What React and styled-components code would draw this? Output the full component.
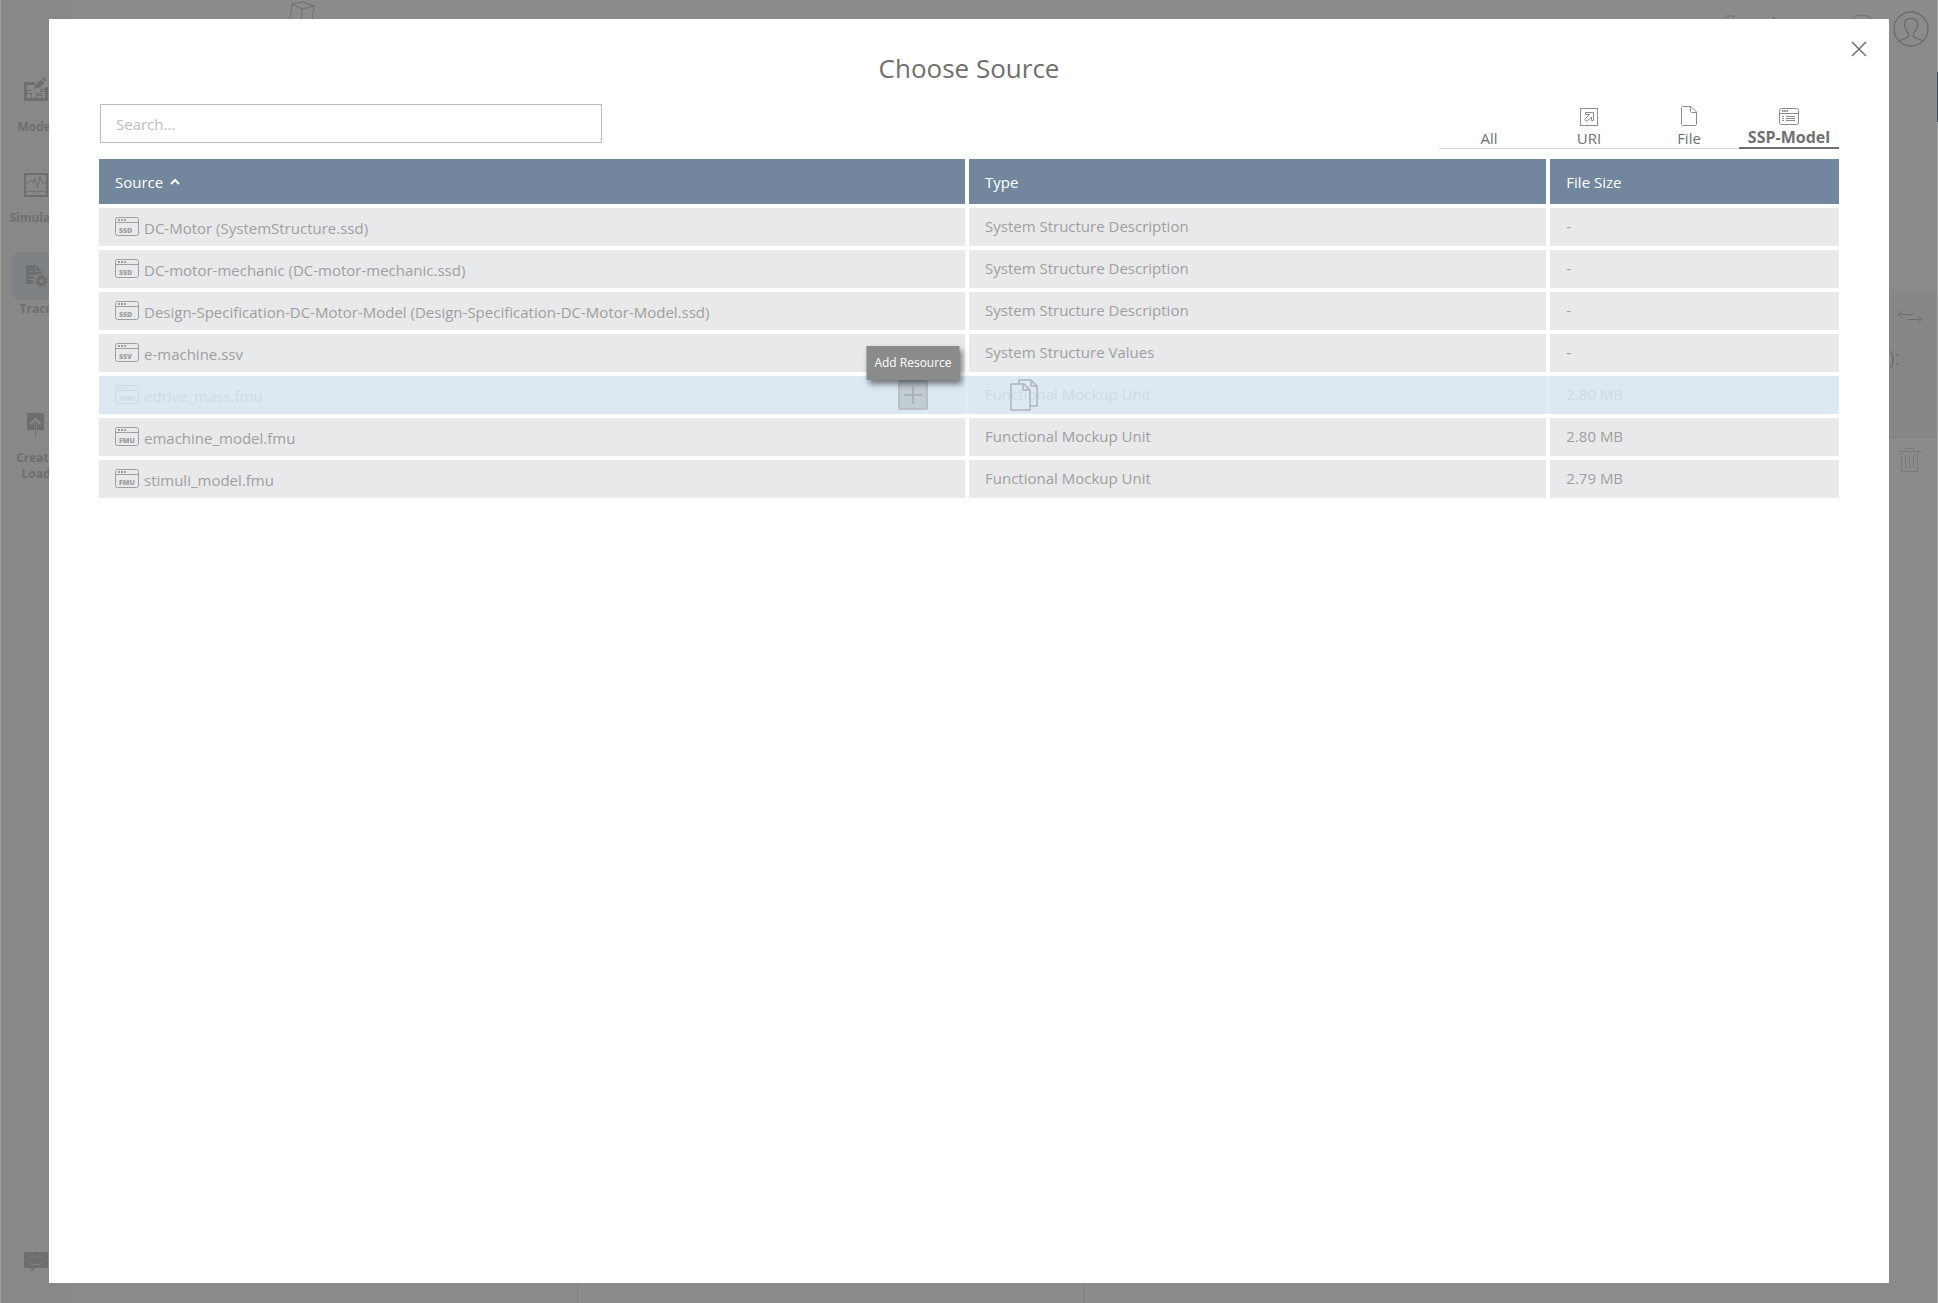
import React, { useState } from 'react';
import styled, { createGlobalStyle } from 'styled-components';

const GlobalStyle = createGlobalStyle`
	* {
		box-sizing: border-box;
	}

	body {
		margin: 0;
		background: #fff;
		color: #706f6f;
		font-family: 'Open Sans', 'Noto Sans', sans-serif;
		font-size: 15px;
		line-height: 20px;
		overflow: hidden;
	}

	button {
		padding: 0;
		border: 0;
		background: none;
		color: inherit;
		font: inherit;
		cursor: pointer;
	}

	svg {
		display: block;
		flex: none;
	}
`;

/* ---------- page behind the dialog ---------- */

const Shell = styled.div`
	display: flex;
	min-height: 100vh;
`;

const Sidebar = styled.nav`
	display: flex;
	flex-direction: column;
	align-items: center;
	gap: 26px;
	width: 72px;
	padding: 70px 0 31px;
	background: #f0f0f0;
`;

const NavItem = styled.a`
	display: flex;
	flex-direction: column;
	align-items: center;
	gap: 1px;
	margin-top: ${props => (props.$spaced ? '58px' : '0')};
	color: #706f6f;
	font-size: 12px;
	font-weight: 700;
	line-height: 16px;
	text-align: center;
	text-decoration: none;
`;

const NavTile = styled.span`
	display: flex;
	align-items: center;
	justify-content: center;
	width: 48px;
	height: 48px;
	border-radius: 8px;
	background: ${props => (props.$active ? '#bcd3dc' : 'transparent')};
`;

const Feedback = styled.button`
	margin-top: auto;
`;

const Main = styled.div`
	display: flex;
	flex: 1;
	flex-direction: column;
`;

const TopBar = styled.header`
	display: flex;
	align-items: center;
	gap: 9px;
	height: 58px;
	padding: 0 9px 0 217px;
`;

const TopActions = styled.div`
	display: grid;
	grid-template-columns: repeat(4, 44px);
	align-items: center;
	justify-items: center;
	margin-left: auto;

	> :last-child {
		grid-column: 4;
	}
`;

const Columns = styled.div`
	display: grid;
	flex: 1;
	grid-template-columns: 506fr 507fr 853fr;
`;

const Column = styled.section`
	padding-top: 232px;
	border-right: 1px solid ${props => (props.$last ? 'transparent' : '#c0c0c0')};
`;

const TraceCard = styled.div`
	display: flex;
	flex-direction: column;
	align-items: flex-end;
	gap: 24px;
	height: 148px;
	padding: 20px 15px 0;
	border-bottom: 2px solid #dadada;
	background: #e1efe9;
`;

const CardText = styled.span`
	margin-right: 22px;
	font-size: 20px;
`;

const TrashRow = styled.div`
	display: flex;
	justify-content: flex-end;
	padding: 10px 15px;
`;

/* ---------- dialog ---------- */

const Backdrop = styled.div`
	position: fixed;
	inset: 0;
	display: flex;
	padding: 19px 48px 20px;
	border-right: 1px solid #a8a8a8;
	border-left: 1px solid #9c9c9c;
	background: rgba(110, 110, 110, 0.8);
`;

const ScrollThumb = styled.div`
	position: absolute;
	top: 72px;
	right: -1px;
	width: 1px;
	height: 50px;
	background: #3d4f5c;
`;

const Dialog = styled.div`
	position: relative;
	flex: 1;
	padding: 31px 50px;
	background: #fff;
`;

const CloseButton = styled.button`
	position: absolute;
	top: 22px;
	right: 22px;
`;

const Title = styled.h1`
	margin: 0;
	font-size: 26px;
	font-weight: 400;
	line-height: 36px;
	text-align: center;
`;

const Toolbar = styled.div`
	display: flex;
	align-items: flex-end;
	justify-content: space-between;
	height: 63px;
	margin-bottom: 6px;
`;

const SearchInput = styled.input`
	width: 502px;
	height: 39px;
	margin: 0 1px 6px;
	padding: 0 15px;
	border: 1px solid #b9bdbd;
	color: #706f6f;
	font: inherit;

	&::placeholder {
		color: #bcbcbc;
		opacity: 1;
	}
`;

const Tabs = styled.div`
	display: flex;
	align-items: flex-end;
`;

const Tab = styled.button`
	display: flex;
	flex-direction: column;
	align-items: center;
	justify-content: flex-end;
	gap: 2px;
	width: 100px;
	height: 44px;
	border-bottom: ${props => (props.$active ? '2px solid #706f6f' : '1px solid #cfd6d8')};
	font-size: ${props => (props.$active ? '16px' : '15px')};
	font-weight: ${props => (props.$active ? 700 : 400)};
`;

const Table = styled.table`
	width: calc(100% + 8px);
	margin: 0 -4px;
	border-collapse: separate;
	border-spacing: 4px;
	table-layout: fixed;
`;

const HeadCell = styled.th`
	width: ${props => props.$width};
	height: 45px;
	padding: 0 16px;
	background: #72879d;
	color: #fff;
	font-weight: 400;
	text-align: left;
`;

const SortButton = styled.button`
	display: flex;
	align-items: center;
	gap: 7px;
`;

const Row = styled.tr`
	position: relative;
`;

const Cell = styled.td`
	height: 38px;
	padding: 0 16px 2px;
	background: #e8e9ea;
	color: #a09f9f;
`;

const SourceName = styled.div`
	display: flex;
	align-items: center;
	gap: 5px;
`;

const SourceLabel = styled.span`
	padding-top: 3px;
`;

const RowActions = styled.div`
	position: absolute;
	inset: 0;
	display: flex;
	align-items: center;
	justify-content: center;
	gap: 82px;
	padding-right: 2px;
	background: rgba(216, 233, 244, 0.8);
`;

const ActionWrap = styled.div`
	position: relative;
	display: flex;
`;

const AddButton = styled.button`
	width: 30px;
	height: 30px;
	border: 2px solid #b7c0c6;
	border-radius: 2px;
	background: #c1ccd3;
	color: #aab2b8;
`;

const CopyButton = styled.button`
	color: #b0b5b9;
`;

const Tooltip = styled.span`
	position: absolute;
	bottom: 100%;
	left: 50%;
	padding: 7px 8px;
	background: rgba(134, 134, 134, 0.96);
	box-shadow: 3px 4px 6px rgba(0, 0, 0, 0.5);
	color: #fff;
	font-size: 12px;
	white-space: nowrap;
	transform: translateX(-50%);
`;

/* ---------- icons ---------- */

const ModelIcon = () => (
	<svg width="24" height="34" viewBox="0 0 24 34" fill="none" stroke="currentColor">
		<path d="M11 6.500H1.500V22.500H22.500V10" strokeWidth="3" />
		<path d="M3 13.500H8M3 16.500H7.500V22M12.500 22V16.500H17.500V22M12.500 18.500H17.500M16 12.500H21M16 14.500H21" />
		<path d="M10 12L11.500 8L17 2.500L20.500 6L15 11Z" fill="currentColor" stroke="none" />
		<path d="M18 1.500L19.500 0L22.500 3L21.500 4.500Z" fill="currentColor" stroke="none" />
	</svg>
);

const SimulateIcon = () => (
	<svg width="24" height="24" viewBox="0 0 24 24" fill="none" stroke="currentColor">
		<rect x="1" y="1" width="22" height="22" strokeWidth="2" />
		<path d="M2 10H4L7 7L9 10L11 5L13.500 15L16 3L18 10H22" />
		<path d="M2 18L4 19L6 18L8 19L10 18L12 19L14 18L16 19L18 18L20 19L22 18" />
	</svg>
);

const TraceIcon = () => (
	<svg width="24" height="24" viewBox="0 0 24 24" fill="currentColor">
		<path d="M2 1H12L18 7V10A7 7 0 0 0 10 20H2Z" />
		<path d="M5 7.500H9M5 11.500H12M5 15.500H10M11.500 2V7.500H17" stroke="#bcd3dc" fill="none" />
		<circle cx="17.500" cy="17" r="3.500" fill="none" stroke="currentColor" strokeWidth="3" />
		<circle cx="17.500" cy="17" r="5" fill="none" stroke="currentColor" strokeWidth="2.500" strokeDasharray="2 1.930" />
	</svg>
);

const CreateIcon = () => (
	<svg width="18" height="24" viewBox="0 0 18 24" fill="none">
		<path d="M0 0H17V17H0Z" fill="currentColor" />
		<path d="M8.500 17V6M3.500 11L8.500 6L13.500 11" stroke="#f0f0f0" strokeWidth="2" />
		<path d="M8.500 7V24" stroke="currentColor" />
	</svg>
);

const FeedbackIcon = () => (
	<svg width="24" height="20" viewBox="0 0 24 20" fill="none">
		<path d="M0 0H24V16H11L7 20V16H0Z" fill="currentColor" />
		<path
			d="M6 7Q6 3.500 8 3.500T10 6M14 6Q14 3.500 16 3.500T18 6M5 8Q5 12.500 9 12.500H15Q18.500 12.500 18.500 8"
			stroke="#c8c8c8"
		/>
	</svg>
);

const CubeIcon = () => (
	<svg width="26" height="56" viewBox="0 0 26 56" fill="none" stroke="currentColor">
		<path d="M3 3L14 1L25 5L13 8ZM3 3L0 26L12 32L13 8M12 32L22 28L25 5" />
	</svg>
);

const DeviceIcon = () => (
	<svg width="10" height="28" viewBox="0 0 10 28" fill="none" stroke="currentColor">
		<path d="M1 1H9V27H1Z" />
	</svg>
);

const ArrowUpIcon = () => (
	<svg width="16" height="26" viewBox="0 0 16 26" fill="none" stroke="currentColor">
		<path d="M8 1V25M3 9L8 1L13 9" />
	</svg>
);

const HelpIcon = () => (
	<svg width="30" height="30" viewBox="0 0 30 30" fill="none" stroke="currentColor">
		<circle cx="15" cy="15" r="14" />
	</svg>
);

const UserIcon = () => (
	<svg width="36" height="36" viewBox="0 0 36 36" fill="none" stroke="currentColor" strokeWidth="1.500">
		<circle cx="18" cy="18" r="17" />
		<path d="M6 30C9 28 15 27.500 15.500 25V22C13 20 12 17 11.500 13C11.500 9 14 7.500 18 7.500S24.500 9 24.500 13C24 17 23 20 20.500 22V25C21 27.500 27 28 30 30" />
	</svg>
);

const SwapIcon = () => (
	<svg width="24" height="14" viewBox="0 0 24 14" fill="none" stroke="currentColor">
		<path d="M15 4.500H0.500M4.500 0.500L0.500 4.500L4.500 8.500M9 9.500H23.500M19.500 5.500L23.500 9.500L19.500 13.500" />
	</svg>
);

const TrashIcon = () => (
	<svg width="24" height="24" viewBox="0 0 24 24" fill="none" stroke="currentColor" opacity="0.6">
		<path d="M0 3.500H24M3.500 3.500V23.500H19.500V3.500M7.500 3V0.500H15.500V3M7.500 7V20M11.500 7V20M15.500 7V20" />
	</svg>
);

const CloseIcon = () => (
	<svg width="16" height="16" viewBox="0 0 16 16" fill="none" stroke="currentColor" strokeWidth="1.500">
		<path d="M1 1L15 15M15 1L1 15" />
	</svg>
);

const UriIcon = () => (
	<svg width="18" height="18" viewBox="0 0 18 18" fill="none" stroke="#8c8c8c">
		<rect x="0.500" y="0.500" width="17" height="17" />
		<path d="M5.500 4.500H13.500V12.500H11.500V9L6.500 13.500L4.500 11.500L9.500 6.500H5.500Z" />
	</svg>
);

const FileIcon = () => (
	<svg width="16" height="20" viewBox="0 0 16 20" fill="none" stroke="#8c8c8c">
		<path d="M1.500 0.500H10L15.500 6V18.500L14.500 19.500H1.500L0.500 18.500V1.500ZM9.500 0.500V5.500L10.500 6.500H15.500" />
	</svg>
);

const SspIcon = () => (
	<svg width="20" height="17" viewBox="0 0 20 17" fill="none" stroke="#8c8c8c">
		<rect x="0.500" y="0.500" width="19" height="16" rx="2" />
		<path d="M0 5.500H20" />
		<path d="M3 3H9" strokeWidth="2" strokeDasharray="1.500 0.750" />
		<path d="M3 8.500H5M3 10.500H5M3 12.500H5M7 8.500H16M7 10.500H16M7 12.500H16" />
	</svg>
);

const SourceIcon = ({ kind }) => (
	<svg width="24" height="19" viewBox="0 0 24 19" fill="none" stroke="currentColor">
		<rect x="0.500" y="0.500" width="23" height="18" rx="2" />
		<path d="M0 5.500H24" />
		<path d="M3 3H11" strokeWidth="2" strokeDasharray="2 1" />
		<text
			x="4"
			y="16"
			fill="currentColor"
			stroke="none"
			fontFamily="'Open Sans', sans-serif"
			fontSize="7"
			fontWeight="800"
		>
			{kind}
		</text>
	</svg>
);

const SortIcon = () => (
	<svg width="10" height="7" viewBox="0 0 10 7" fill="none" stroke="currentColor" strokeWidth="2">
		<path d="M1 6L5 2L9 6" />
	</svg>
);

const PlusIcon = () => (
	<svg width="26" height="26" viewBox="0 0 26 26" fill="none" stroke="currentColor" strokeWidth="2">
		<path d="M13 4V22M4 13H22" />
	</svg>
);

const CopyIcon = () => (
	<svg width="28" height="32" viewBox="0 0 28 32" fill="none" stroke="currentColor" strokeWidth="1.500">
		<path d="M1 5H14L20 11V31H1ZM13 5V11H20" />
		<path d="M9 5V1H21L27 7V27H20M21 1V7H27" />
	</svg>
);

const TABS = [
	{ name: 'All' },
	{ name: 'URI', icon: <UriIcon /> },
	{ name: 'File', icon: <FileIcon /> },
	{ name: 'SSP-Model', icon: <SspIcon /> },
];

const TYPES = {
	SSD: 'System Structure Description',
	SSV: 'System Structure Values',
	FMU: 'Functional Mockup Unit',
};

const SOURCES = [
	{ name: 'DC-Motor (SystemStructure.ssd)', kind: 'SSD', size: '-' },
	{ name: 'DC-motor-mechanic (DC-motor-mechanic.ssd)', kind: 'SSD', size: '-' },
	{
		name: 'Design-Specification-DC-Motor-Model (Design-Specification-DC-Motor-Model.ssd)',
		kind: 'SSD',
		size: '-',
	},
	{ name: 'e-machine.ssv', kind: 'SSV', size: '-' },
	{ name: 'edrive_mass.fmu', kind: 'FMU', size: '2.80 MB' },
	{ name: 'emachine_model.fmu', kind: 'FMU', size: '2.80 MB' },
	{ name: 'stimuli_model.fmu', kind: 'FMU', size: '2.79 MB' },
];

const Background = () => (
	<Shell>
		<Sidebar>
			<NavItem href="#model">
				<NavTile>
					<ModelIcon />
				</NavTile>
				Model
			</NavItem>
			<NavItem href="#simulate">
				<NavTile>
					<SimulateIcon />
				</NavTile>
				Simulate
			</NavItem>
			<NavItem href="#trace">
				<NavTile $active>
					<TraceIcon />
				</NavTile>
				Trace
			</NavItem>
			<NavItem href="#create" $spaced>
				<NavTile>
					<CreateIcon />
				</NavTile>
				<span>
					Create
					<br />
					Load
				</span>
			</NavItem>
			<Feedback aria-label="Feedback">
				<FeedbackIcon />
			</Feedback>
		</Sidebar>
		<Main>
			<TopBar>
				<CubeIcon />
				<TopActions>
					<DeviceIcon />
					<ArrowUpIcon />
					<HelpIcon />
				</TopActions>
				<UserIcon />
			</TopBar>
			<Columns>
				<Column />
				<Column />
				<Column $last>
					<TraceCard>
						<SwapIcon />
						<CardText>():</CardText>
					</TraceCard>
					<TrashRow>
						<TrashIcon />
					</TrashRow>
				</Column>
			</Columns>
		</Main>
	</Shell>
);

const App = () => {
	const [tab, setTab] = useState('SSP-Model');
	const [search, setSearch] = useState('');
	const [hovered, setHovered] = useState('edrive_mass.fmu');

	const rows = SOURCES.filter(source => source.name.toLowerCase().includes(search.toLowerCase()));

	return (
		<>
			<GlobalStyle />
			<Background />
			<Backdrop>
				<ScrollThumb />
				<Dialog role="dialog" aria-labelledby="dialog-title">
					<CloseButton aria-label="Close">
						<CloseIcon />
					</CloseButton>
					<Title id="dialog-title">Choose Source</Title>
					<Toolbar>
						<SearchInput
							aria-label="Search"
							placeholder="Search..."
							value={search}
							onChange={e => setSearch(e.target.value)}
						/>
						<Tabs role="tablist">
							{TABS.map(({ name, icon }) => (
								<Tab
									key={name}
									role="tab"
									aria-selected={tab === name}
									$active={tab === name}
									onClick={() => setTab(name)}
								>
									{icon}
									{name}
								</Tab>
							))}
						</Tabs>
					</Toolbar>
					<Table>
						<thead>
							<tr>
								<HeadCell $width="50%">
									<SortButton>
										Source
										<SortIcon />
									</SortButton>
								</HeadCell>
								<HeadCell $width="33.333%">Type</HeadCell>
								<HeadCell>File Size</HeadCell>
							</tr>
						</thead>
						<tbody>
							{rows.map(({ name, kind, size }) => (
								<Row key={name} onMouseEnter={() => setHovered(name)}>
									<Cell>
										<SourceName>
											<SourceIcon kind={kind} />
											<SourceLabel>{name}</SourceLabel>
										</SourceName>
										{hovered === name && (
											<RowActions>
												<ActionWrap>
													<AddButton aria-label="Add Resource">
														<PlusIcon />
													</AddButton>
													<Tooltip role="tooltip">Add Resource</Tooltip>
												</ActionWrap>
												<CopyButton aria-label="Copy">
													<CopyIcon />
												</CopyButton>
											</RowActions>
										)}
									</Cell>
									<Cell>{TYPES[kind]}</Cell>
									<Cell>{size}</Cell>
								</Row>
							))}
						</tbody>
					</Table>
				</Dialog>
			</Backdrop>
		</>
	);
};

export default App;
